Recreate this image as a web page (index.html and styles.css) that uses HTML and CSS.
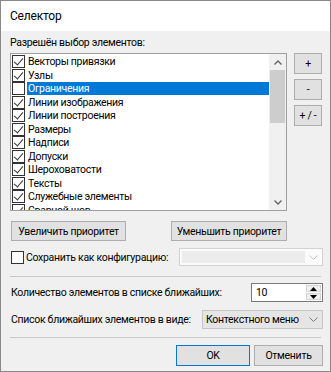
FILE: index.html
```html
<!DOCTYPE html>
<html lang="ru">
<head>
    <meta charset="UTF-8">
    <meta name="viewport" content="width=device-width, initial-scale=1.0">
    <title>Селектор</title>

    <link rel="stylesheet" href="styles.css">
</head>

<body>
    <div class="window">
        <div class="titlebar">Селектор</div>

        <div class="content">
            <div class="label">Разрешён выбор элементов:</div>

            <div class="list-row">
                <div class="listbox">
                    <ul class="items">
                        <li><span class="check on"></span><span class="name">Векторы привязки</span></li>
                        <li><span class="check on"></span><span class="name">Узлы</span></li>
                        <li class="selected"><span class="check"></span><span class="name">Ограничения</span></li>
                        <li><span class="check on"></span><span class="name">Линии изображения</span></li>
                        <li><span class="check on"></span><span class="name">Линии построения</span></li>
                        <li><span class="check on"></span><span class="name">Размеры</span></li>
                        <li><span class="check on"></span><span class="name">Надписи</span></li>
                        <li><span class="check on"></span><span class="name">Допуски</span></li>
                        <li><span class="check on"></span><span class="name">Шероховатости</span></li>
                        <li><span class="check on"></span><span class="name">Тексты</span></li>
                        <li><span class="check on"></span><span class="name">Служебные элементы</span></li>
                        <li><span class="check on"></span><span class="name">Сварной шов</span></li>
                    </ul>
                    <div class="scrollbar">
                        <div class="sb-arrow">
                            <svg width="8" height="5" viewBox="0 0 8 5"><polyline points="0.5,4.5 4,1 7.5,4.5" fill="none" stroke="#606060" stroke-width="1.3"/></svg>
                        </div>
                        <div class="sb-track"><div class="sb-thumb"></div></div>
                        <div class="sb-arrow">
                            <svg width="8" height="5" viewBox="0 0 8 5"><polyline points="0.5,0.5 4,4 7.5,0.5" fill="none" stroke="#606060" stroke-width="1.3"/></svg>
                        </div>
                    </div>
                </div>

                <div class="side-buttons">
                    <button class="btn small">+</button>
                    <button class="btn small">-</button>
                    <button class="btn small">+ / -</button>
                </div>
            </div>

            <div class="priority-row">
                <button class="btn priority up">Увеличить приоритет</button>
                <button class="btn priority down">Уменьшить приоритет</button>
            </div>

            <div class="config-row">
                <span class="check"></span>
                <span class="config-label">Сохранить как конфигурацию:</span>
                <div class="combo disabled">
                    <div class="combo-field"></div>
                    <div class="combo-arrow">
                        <svg width="9" height="5" viewBox="0 0 9 5"><polyline points="0.5,0.5 4.5,4.5 8.5,0.5" fill="none" stroke="#c4c4c4" stroke-width="1"/></svg>
                    </div>
                </div>
            </div>

            <div class="separator"></div>

            <div class="field-row">
                <span class="field-label">Количество элементов в списке ближайших:</span>
                <div class="spin">
                    <div class="spin-value">10</div>
                    <div class="spin-buttons">
                        <div class="spin-btn">
                            <svg width="7" height="4" viewBox="0 0 7 4"><polygon points="0,4 3.5,0 7,4" fill="#000"/></svg>
                        </div>
                        <div class="spin-btn">
                            <svg width="7" height="4" viewBox="0 0 7 4"><polygon points="0,0 3.5,4 7,0" fill="#000"/></svg>
                        </div>
                    </div>
                </div>
            </div>

            <div class="field-row second">
                <span class="field-label">Список ближайших элементов в виде:</span>
                <div class="combo view">
                    <div class="combo-text">Контекстного меню</div>
                    <div class="combo-arrow">
                        <svg width="9" height="5" viewBox="0 0 9 5"><polyline points="0.5,0.5 4.5,4.5 8.5,0.5" fill="none" stroke="#7a7a7a" stroke-width="1"/></svg>
                    </div>
                </div>
            </div>

            <div class="separator bottom"></div>

            <div class="footer">
                <button class="btn default">OK</button>
                <button class="btn cancel">Отменить</button>
            </div>
        </div>
    </div>
</body>
</html>
```

FILE: styles.css
```css
* {
  margin: 0;
  padding: 0;
  box-sizing: border-box;
}

body {
  background: #fff;
}

.window {
  width: 331px;
  height: 372px;
  border: 1px solid #888;
  background: #f0f0f0;
  display: flex;
  flex-direction: column;
  font-family: "Segoe UI", Roboto, "Noto Sans", sans-serif;
  font-size: 10.5px;
  letter-spacing: -0.3px;
  color: #000;
  white-space: nowrap;
}

.titlebar {
  height: 30px;
  line-height: 30px;
  padding-left: 9px;
  background: #fff;
  font-size: 12px;
  letter-spacing: -0.2px;
}

.content {
  flex: 1;
  padding: 0 7px 0 9px;
  display: flex;
  flex-direction: column;
}

.label {
  margin: 5px 0 3px;
  line-height: 14px;
}

/* список элементов */
.list-row {
  display: flex;
  align-items: flex-start;
  gap: 7px;
}

.listbox {
  width: 277px;
  height: 158px;
  border: 1px solid #a0a0a0;
  background: #fff;
  display: flex;
  overflow: hidden;
}

.items {
  flex: 1;
  list-style: none;
  padding: 1px 0 0 1px;
  overflow: hidden;
}

.items li {
  height: 13.5px;
  display: flex;
  align-items: center;
}

.check {
  position: relative;
  flex: none;
  width: 13px;
  height: 13px;
  border: 1px solid #333;
  background: #fff;
}

.check.on::after {
  content: "";
  position: absolute;
  left: 3px;
  top: 0;
  width: 4px;
  height: 8px;
  border-right: 1px solid #333;
  border-bottom: 1px solid #333;
  transform: rotate(40deg);
}

.items .name {
  flex: 1;
  margin-left: 2px;
  padding-left: 1px;
  height: 13px;
  line-height: 13px;
}

.items li.selected .name {
  background: #0078d7;
  color: #fff;
}

.scrollbar {
  width: 17px;
  flex: none;
  background: #f0f0f0;
  display: flex;
  flex-direction: column;
}

.sb-arrow {
  height: 16px;
  display: flex;
  align-items: center;
  justify-content: center;
}

.sb-track {
  flex: 1;
}

.sb-thumb {
  height: 53px;
  margin: 0 1px;
  background: #cdcdcd;
}

/* кнопки */
.btn {
  font: inherit;
  letter-spacing: inherit;
  color: #000;
  background: #e1e1e1;
  border: 1px solid #adadad;
  white-space: nowrap;
}

.side-buttons {
  display: flex;
  flex-direction: column;
  gap: 5px;
}

.btn.small {
  width: 28px;
  height: 21px;
}

.priority-row {
  width: 277px;
  margin-top: 10px;
  padding-left: 1px;
  display: flex;
  justify-content: space-between;
}

.btn.priority {
  height: 20px;
}

.btn.up {
  width: 115px;
}

.btn.down {
  width: 116px;
}

.config-row {
  margin-top: 7px;
  height: 18px;
  display: flex;
  align-items: center;
}

.config-row .check {
  margin-left: 1px;
}

.config-label {
  margin-left: 2px;
}

.combo {
  margin-left: auto;
  display: flex;
  flex: none;
}

.combo.disabled {
  width: 144px;
  height: 18px;
  border: 1px solid #d2d2d2;
  background: #fbfbfb;
  padding: 2px 0 2px 2px;
}

.combo-field {
  flex: 1;
  background: #ececec;
}

.combo-arrow {
  width: 17px;
  display: flex;
  align-items: center;
  justify-content: center;
}

.separator {
  height: 1px;
  margin: 10px 2px 0 0;
  background: #c8c8c8;
}

.separator.bottom {
  margin-top: 8px;
}

.field-row {
  margin-top: 6px;
  height: 19px;
  display: flex;
  align-items: center;
}

.field-row.second {
  margin-top: 8px;
}

.field-label {
  margin-left: 1px;
}

.spin {
  margin-left: auto;
  flex: none;
  width: 72px;
  height: 19px;
  border: 1px solid #7a7a7a;
  background: #fff;
  display: flex;
}

.spin-value {
  flex: 1;
  padding-left: 4px;
  line-height: 17px;
}

.spin-buttons {
  width: 17px;
  display: flex;
  flex-direction: column;
  gap: 1px;
  padding: 1px;
}

.spin-btn {
  flex: 1;
  background: #f0f0f0;
  border: 1px solid #d4d4d4;
  display: flex;
  align-items: center;
  justify-content: center;
}

.combo.view {
  width: 121px;
  height: 19px;
  border: 1px solid #c6c6c6;
  background: #e5e5e5;
}

.combo-text {
  flex: 1;
  padding-left: 3px;
  line-height: 17px;
}

.footer {
  margin-top: 7px;
  display: flex;
  justify-content: flex-end;
  gap: 4px;
}

.footer .btn {
  height: 21px;
}

.btn.default {
  width: 74px;
  border-color: #0078d7;
}

.btn.cancel {
  width: 69px;
}
```
